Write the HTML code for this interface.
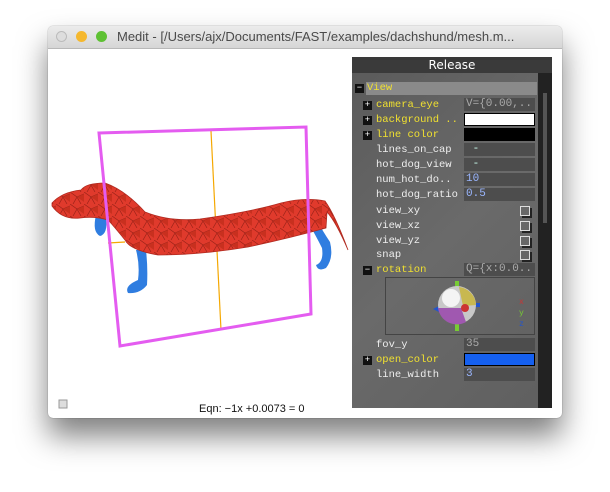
<!DOCTYPE html>
<html><head><style>
body{margin:0;width:610px;height:492px;background:#fff;position:relative;overflow:hidden;font-family:"Liberation Sans",sans-serif}
.win{position:absolute;left:48px;top:26px;width:514px;height:392px;background:#fff;border-radius:5px;box-shadow:0 18px 30px rgba(0,0,0,.5),0 0 1px rgba(0,0,0,.5)}
.tb{position:absolute;left:0;top:0;width:514px;height:22px;background:linear-gradient(#ececec,#d6d6d6);border-radius:5px 5px 0 0;border-bottom:1px solid #b8b8b8}
.tb span{position:absolute;left:69px;top:3px;font-size:13px;color:#4a4a4a;white-space:nowrap}
.dot{position:absolute;top:5px;width:11px;height:11px;border-radius:50%}
.panel{position:absolute;left:352px;top:57px;width:200px;height:351px;background:linear-gradient(135deg,#5a5a5a,#6a6a6a 50%,#5f5f5f);font-family:"Liberation Mono",monospace;font-size:10.5px;color:#eee}
.hd{position:absolute;left:0;top:0;width:200px;height:16px;background:#3a3a3a;text-align:center;color:#fff;font-family:"DejaVu Sans",sans-serif;font-size:12px;line-height:16px}
.sb{position:absolute;left:186px;top:16px;width:14px;height:335px;background:#222}
.sb i{position:absolute;left:5px;top:20px;width:4px;height:130px;background:#555}
.r{position:absolute;left:24px;height:14px;line-height:14px;white-space:nowrap}
.y{color:#f0e030}
.v{position:absolute;left:112px;width:71px;height:13px;background:#4d4d4d;line-height:13px;padding-left:2px;box-sizing:border-box;color:#9ab6ff;white-space:nowrap;overflow:hidden;font-size:11px}
.pm{position:absolute;left:11px;width:9px;height:9px;background:#111;color:#fff;font-size:9px;line-height:9px;text-align:center}
.cb{position:absolute;left:168px;width:8px;height:8px;border:1px solid #ddd;box-shadow:2px 2px 0 #222}
</style></head><body>
<div class="win">
<div class="tb"><div class="dot" style="left:8px;background:#ddd;border:1px solid #bbb;width:9px;height:9px"></div><div class="dot" style="left:28px;background:#f5b82e"></div><div class="dot" style="left:48px;background:#5ec133"></div><span>Medit - [/Users/ajx/Documents/FAST/examples/dachshund/mesh.m...</span></div>
</div>
<svg style="position:absolute;left:0;top:0" width="610" height="492">
<defs><pattern id="p" width="14" height="12" patternUnits="userSpaceOnUse"><rect width="14" height="12" fill="#e03a2c"/><path d="M0 0 L7 5 L3 12 M7 5 L14 2 M7 5 L11 12" stroke="#9a2218" stroke-width=".7" fill="none"/><path d="M7 5 L14 2 L14 10Z" fill="#c8301f"/></pattern></defs>
<path d="M211 131 L221 330" stroke="#f5a800" stroke-width="1.2"/>
<path d="M108 243 L125 242" stroke="#f5a800" stroke-width="1.2"/>
<g fill="#2f7de0">
<path d="M96 215 Q92 232 100 236 Q108 234 106 218Z"/>
<path d="M136 250 Q140 265 138 280 Q124 286 128 293 Q140 294 147 285 Q148 268 146 250Z"/>
<path d="M308 222 Q316 236 322 248 Q324 262 316 265 Q318 272 326 268 Q334 258 330 242 Q322 230 318 222Z"/>
</g>
<path d="M52 203 Q62 192 81 190 Q86 183 105 183 Q125 190 145 212 Q170 222 200 219 Q250 212 281 203 Q305 197 325 201 Q335 215 348 250 Q336 222 327 212 L326 228 Q290 238 248 247 Q200 255 158 255 Q130 250 125 240 Q112 224 108 220 Q95 216 80 218 Q62 220 52 206Z" fill="url(#p)" stroke="#b02a20" stroke-width=".8"/>
<path d="M99 133 L306 127 L311 314 L120 346 Z" fill="none" stroke="#e45cf0" stroke-width="3"/>
<rect x="59" y="400" width="8" height="8" fill="#ddd" stroke="#999"/>
<text x="199" y="412" font-family="Liberation Sans" font-size="11" fill="#111">Eqn:  −1x +0.0073 = 0</text>
</svg>
<div class="panel">
<div class="hd">Release</div>
<div class="sb"><i></i></div>
<div style="position:absolute;left:14px;top:25px;width:171px;height:13px;background:#8a8a8a"></div>
<div class="pm" style="left:3px;top:27px">−</div><div class="r y" style="left:15px;top:24px">View</div>
<div class="pm" style="top:44px">+</div><div class="r y" style="top:41px">camera_eye</div><div class="v" style="top:41px;color:#aaa">V={0.00,..</div>
<div class="pm" style="top:59px">+</div><div class="r y" style="top:56px">background ..</div><div class="v" style="top:56px;background:#fff;border:1px solid #000"></div>
<div class="pm" style="top:74px">+</div><div class="r y" style="top:71px">line color</div><div class="v" style="top:71px;background:#000"></div>
<div class="r" style="top:86px">lines_on_cap</div><div class="v" style="top:86px;color:#cfe">&nbsp;-</div>
<div class="r" style="top:101px">hot_dog_view</div><div class="v" style="top:101px;color:#cfe">&nbsp;-</div>
<div class="r" style="top:116px">num_hot_do..</div><div class="v" style="top:116px">10</div>
<div class="r" style="top:131px">hot_dog_ratio</div><div class="v" style="top:131px">0.5</div>
<div class="r" style="top:147px">view_xy</div><div class="cb" style="top:149px"></div>
<div class="r" style="top:162px">view_xz</div><div class="cb" style="top:164px"></div>
<div class="r" style="top:177px">view_yz</div><div class="cb" style="top:179px"></div>
<div class="r" style="top:191px">snap</div><div class="cb" style="top:193px"></div>
<div class="pm" style="top:209px">−</div><div class="r y" style="top:206px">rotation</div><div class="v" style="top:206px;color:#aaa">Q={x:0.0..</div>
<div style="position:absolute;left:33px;top:220px;width:148px;height:56px;border:1px solid #444"></div>
<svg style="position:absolute;left:33px;top:220px" width="150" height="57">
<rect x="70" y="4" width="4" height="12" fill="#7c3"/><rect x="70" y="40" width="4" height="14" fill="#7c3"/>
<path d="M48 32 L56 28 L56 36Z" fill="#25c"/><rect x="56" y="30" width="4" height="4" fill="#25c"/><rect x="89" y="26" width="6" height="4" fill="#25c"/>
<circle cx="72" cy="28" r="19" fill="#c8c8c8"/>
<path d="M53 31 A19 19 0 0 0 81 45 L76 31Z" fill="#a058b0"/>
<path d="M74 10 A19 19 0 0 1 91 28 L78 29Z" fill="#c8b850"/>
<circle cx="66" cy="21" r="9" fill="#f4f4f4"/>
<circle cx="80" cy="31" r="4" fill="#c33"/>
<text x="134" y="27" font-size="8" fill="#c33">x</text><text x="134" y="38" font-size="8" fill="#7c3">y</text><text x="134" y="49" font-size="8" fill="#25c">z</text>
</svg>
<div class="r" style="top:281px">fov_y</div><div class="v" style="top:281px;color:#aaa">35</div>
<div class="pm" style="top:299px">+</div><div class="r y" style="top:296px">open_color</div><div class="v" style="top:296px;background:#1560f0;border:1px solid #000"></div>
<div class="r" style="top:311px">line_width</div><div class="v" style="top:311px">3</div>
</div>
</body></html>
